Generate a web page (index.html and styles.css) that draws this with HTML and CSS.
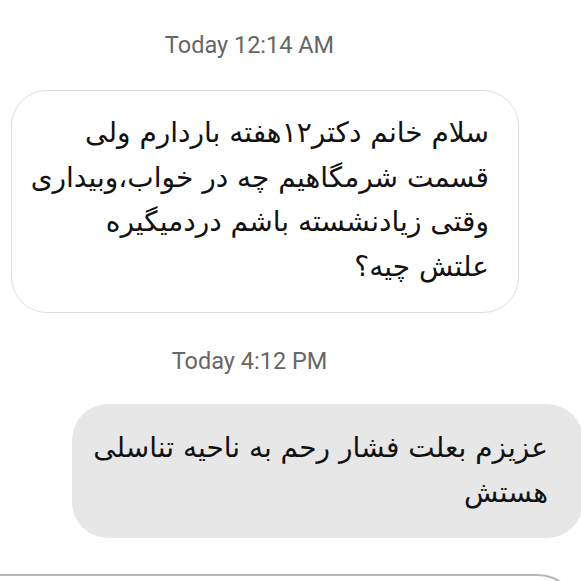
FILE: index.html
```html
<!DOCTYPE html>
<html lang="fa">
<head>
<meta charset="utf-8">
<link rel="stylesheet" href="styles.css">
</head>
<body>
<div class="thread">
  <div class="stamp stamp-first">Today 12:14 AM</div>
  <div class="bubble bubble-in" dir="rtl">
    <p class="msg">سلام خانم دکتر۱۲هفته باردارم ولی<br>قسمت شرمگاهیم چه در خواب،وبیداری<br>وقتی زیادنشسته باشم دردمیگیره<br>علتش چیه؟</p>
  </div>
  <div class="stamp stamp-second">Today 4:12 PM</div>
  <div class="bubble bubble-out" dir="rtl">
    <p class="msg">عزیزم بعلت فشار رحم به ناحیه تناسلی<br>هستش</p>
  </div>
  <div class="composer"></div>
</div>
</body>
</html>
```
FILE: styles.css
```css
html, body {
  margin: 0;
  padding: 0;
  background: #ffffff;
}
body {
  width: 581px;
  height: 581px;
  overflow: hidden;
}
.thread {
  display: flex;
  flex-direction: column;
  align-items: flex-start;
}
.stamp {
  width: 499px;
  text-align: center;
  font-family: Roboto, "Liberation Sans", sans-serif;
  font-size: 23.5px;
  line-height: 30px;
  color: #666666;
}
.stamp-first {
  margin-top: 30px;
}
.stamp-second {
  margin-top: 33px;
}
.bubble {
  box-sizing: border-box;
  border-radius: 36px;
}
.msg {
  margin: 0;
  font-family: "DejaVu Sans", sans-serif;
  font-size: 28px;
  line-height: 44.5px;
  color: #111111;
  text-align: right;
}
.bubble-in {
  margin-top: 30px;
  margin-left: 11px;
  width: 508px;
  height: 223px;
  border: 1.5px solid #dedede;
  background: #ffffff;
  padding: 20px 29px 0 14px;
}
.bubble-out {
  margin-top: 28px;
  margin-left: 72px;
  width: 511px;
  height: 134px;
  background: #e7e7e7;
  padding: 22px 35px 0 14px;
}
.composer {
  margin-top: 36px;
  margin-left: -40px;
  width: 618px;
  height: 60px;
  box-sizing: border-box;
  border-top: 2px solid #b8b8b8;
  border-right: 2px solid #b8b8b8;
  border-top-right-radius: 40px;
}
```
